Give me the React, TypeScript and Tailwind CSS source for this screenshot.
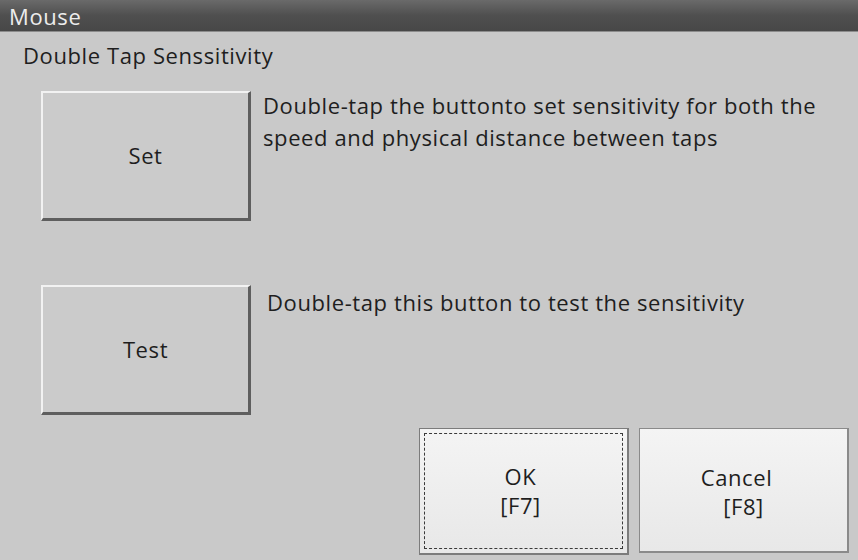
export default function App() {
  const font = { fontFamily: '"Open Sans", "Noto Sans", sans-serif' };

  return (
    <div className="w-[858px] h-[560px] overflow-hidden bg-[#c9c9c9] flex flex-col text-[#1e1e1e] tracking-[0.6px]" style={font}>
      {/* title bar */}
      <div className="h-[32px] shrink-0 bg-gradient-to-b from-[#6a6a6a] via-[#4f4f4f] to-[#474747] border-b border-[#8c8c8c] flex items-center pl-[9px]">
        <span className="text-[22px] leading-none text-[#ececec]">Mouse</span>
      </div>

      <div className="mt-[8px] pl-[23px] text-[22px] leading-[30px]">Double Tap Senssitivity</div>

      {/* set row */}
      <div className="flex items-start mt-[19px]">
        <button className="ml-[41px] mt-[2px] w-[210px] h-[130px] shrink-0 bg-[#cbcbcb] border-t-2 border-l-2 border-t-[#f2f2f2] border-l-[#f2f2f2] border-b-[3px] border-r-[3px] border-b-[#5e5e5e] border-r-[#5e5e5e] text-[22px]">
          Set
        </button>
        <p className="ml-[12px] text-[22px] leading-[32px]">
          Double-tap the buttonto set sensitivity for both the
          <br />
          speed and physical distance between taps
        </p>
      </div>

      {/* test row */}
      <div className="flex items-start mt-[64px]">
        <button className="ml-[41px] w-[210px] h-[130px] shrink-0 bg-[#cbcbcb] border-t-2 border-l-2 border-t-[#f2f2f2] border-l-[#f2f2f2] border-b-[3px] border-r-[3px] border-b-[#5e5e5e] border-r-[#5e5e5e] text-[22px]">
          Test
        </button>
        <p className="ml-[16px] mt-[1px] text-[22px] leading-[32px]">Double-tap this button to test the sensitivity</p>
      </div>

      {/* ok / cancel */}
      <div className="flex justify-end gap-[10px] pr-[9px] mt-[13px]">
        <button className="w-[210px] h-[127px] bg-gradient-to-b from-[#f4f4f4] to-[#e8e8e8] border border-[#7c7c7c] border-r-2 border-b-2 p-[4px]">
          <div className="w-full h-full border border-dashed border-[#3a3a3a] flex flex-col items-center justify-center text-[22px] leading-[29px] pr-[6px]">
            <span>OK</span>
            <span>[F7]</span>
          </div>
        </button>
        <button className="w-[210px] h-[125px] bg-gradient-to-b from-[#f4f4f4] to-[#e8e8e8] border border-[#8a8a8a] border-r-2 border-b-2 flex flex-col items-center justify-center text-[22px] leading-[29px] pt-[4px]">
          <span className="pr-[14px]">Cancel</span>
          <span>[F8]</span>
        </button>
      </div>
    </div>
  );
}
